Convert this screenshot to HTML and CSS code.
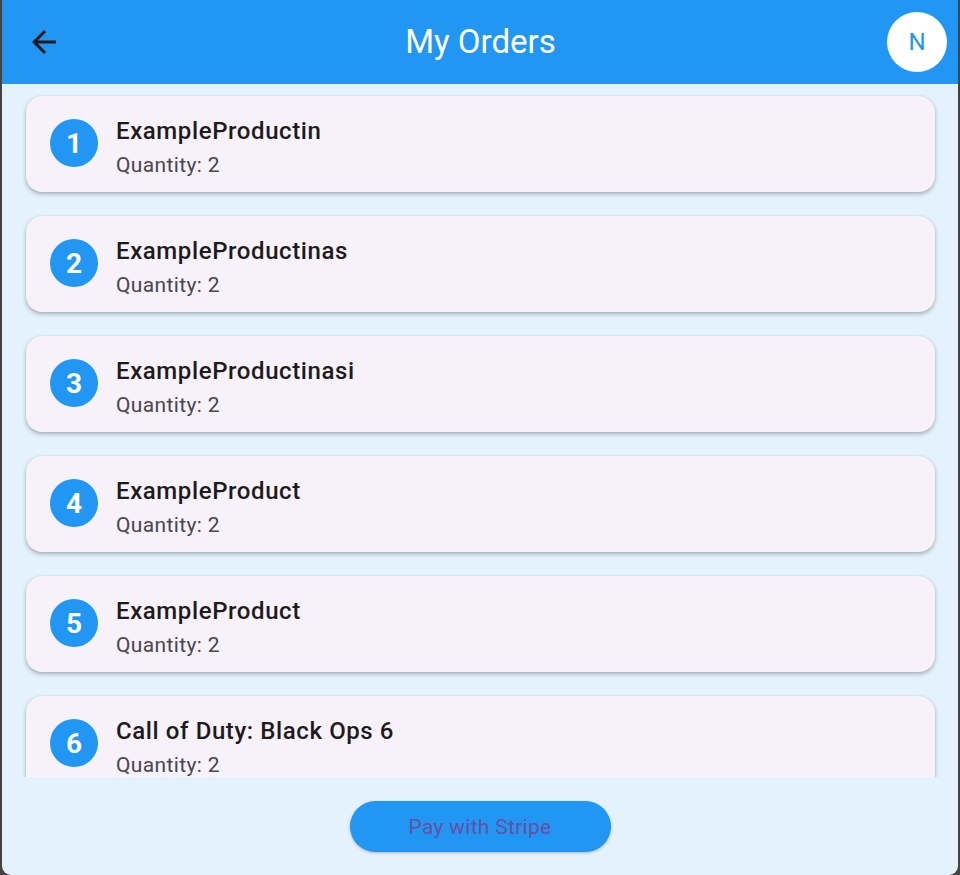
FILE: index.html
```html
<!DOCTYPE html>
<html lang="en">
<head>
<meta charset="utf-8">
<title>My Orders</title>
<link rel="stylesheet" href="styles.css">
</head>
<body>
<div class="app">
  <header class="appbar">
    <button class="back" aria-label="Back">
      <svg viewBox="0 0 24 24" width="36" height="36"><path d="M20 11H7.83l5.59-5.59L12 4l-8 8 8 8 1.41-1.41L7.83 13H20v-2z" fill="#1d1b20"/></svg>
    </button>
    <h1 class="title">My Orders</h1>
    <div class="avatar">N</div>
  </header>
  <main class="list">
    <div class="card"><div class="num">1</div><div class="text"><div class="name">ExampleProductin</div><div class="qty">Quantity: 2</div></div></div>
    <div class="card"><div class="num">2</div><div class="text"><div class="name">ExampleProductinas</div><div class="qty">Quantity: 2</div></div></div>
    <div class="card"><div class="num">3</div><div class="text"><div class="name">ExampleProductinasi</div><div class="qty">Quantity: 2</div></div></div>
    <div class="card"><div class="num">4</div><div class="text"><div class="name">ExampleProduct</div><div class="qty">Quantity: 2</div></div></div>
    <div class="card"><div class="num">5</div><div class="text"><div class="name">ExampleProduct</div><div class="qty">Quantity: 2</div></div></div>
    <div class="card"><div class="num">6</div><div class="text"><div class="name">Call of Duty: Black Ops 6</div><div class="qty">Quantity: 2</div></div></div>
  </main>
  <footer class="footer">
    <button class="pay">Pay with Stripe</button>
  </footer>
</div>
</body>
</html>
```
FILE: styles.css
```css
html, body {
  margin: 0;
  padding: 0;
  height: 875px;
  background: #444444;
  overflow: hidden;
}
body {
  padding: 0 2px;
  box-sizing: border-box;
  font-family: Roboto, "Liberation Sans", sans-serif;
}
.app {
  height: 875px;
  background: #E3F2FD;
  border-radius: 0 0 9px 9px;
  overflow: hidden;
  display: flex;
  flex-direction: column;
}
.appbar {
  height: 84px;
  flex: none;
  background: #2196F3;
  display: flex;
  align-items: center;
  padding: 0 11px 0 24px;
  position: relative;
  z-index: 2;
}
.back {
  width: 36px;
  height: 36px;
  padding: 0;
  border: 0;
  background: none;
  display: flex;
}
.title {
  flex: 1;
  margin: 0;
  text-align: center;
  color: #fff;
  font-weight: 400;
  font-size: 33px;
  line-height: 40px;
  padding-left: 12px;
}
.avatar {
  width: 60px;
  height: 60px;
  border-radius: 50%;
  background: #fff;
  color: #2196F3;
  font-size: 24px;
  display: flex;
  align-items: center;
  justify-content: center;
}
.list {
  flex: 1;
  overflow: hidden;
  padding: 12px 23px 0 24px;
  display: flex;
  flex-direction: column;
  gap: 24px;
}
.card {
  flex: none;
  height: 96px;
  box-sizing: border-box;
  background: #F7F2FA;
  border-radius: 16px;
  box-shadow: 0 2px 4px rgba(0,0,0,0.28), 0 0 1px rgba(0,0,0,0.12);
  display: flex;
  align-items: center;
  padding: 0 24px;
}
.num {
  width: 48px;
  height: 48px;
  border-radius: 50%;
  background: #2196F3;
  color: #fff;
  font-weight: 700;
  font-size: 28px;
  display: flex;
  align-items: center;
  justify-content: center;
  flex: none;
  margin-top: -2px;
}
.text {
  margin-left: 18px;
  padding-top: 8px;
}
.name {
  font-size: 24px;
  font-weight: 500;
  letter-spacing: 0.6px;
  line-height: 34px;
  color: #1d1b20;
}
.qty {
  font-size: 21px;
  letter-spacing: 0.37px;
  line-height: 34px;
  color: #49454f;
}
.footer {
  flex: none;
  height: 98px;
  display: flex;
  justify-content: center;
  padding-top: 24px;
  box-sizing: border-box;
}
.pay {
  width: 261px;
  height: 51px;
  border: 0;
  border-radius: 26px;
  background: #2196F3;
  color: #6750A4;
  font-family: Roboto, "Liberation Sans", sans-serif;
  font-size: 21px;
  font-weight: 400;
  letter-spacing: 0.3px;
  box-shadow: 0 1px 3px rgba(0,0,0,0.25);
  padding: 0;
}
```
